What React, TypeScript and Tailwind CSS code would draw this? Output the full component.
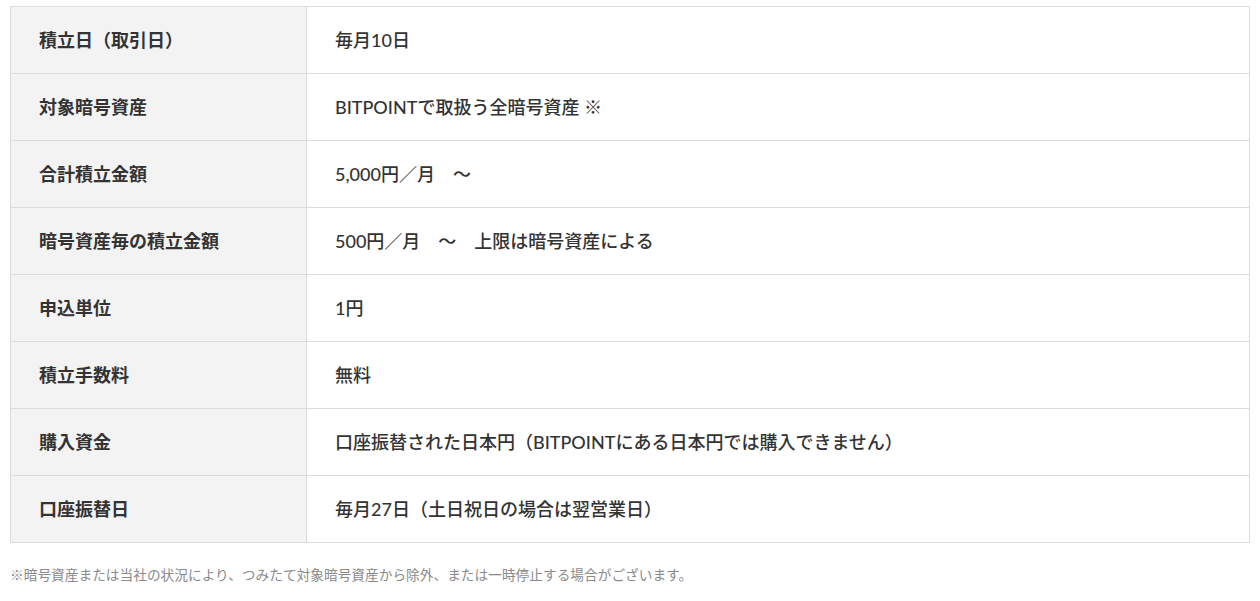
const rows: [string, string][] = [
  ["積立日（取引日）", "毎月10日"],
  ["対象暗号資産", "BITPOINTで取扱う全暗号資産 ※"],
  ["合計積立金額", "5,000円／月　～"],
  ["暗号資産毎の積立金額", "500円／月　～　上限は暗号資産による"],
  ["申込単位", "1円"],
  ["積立手数料", "無料"],
  ["購入資金", "口座振替された日本円（BITPOINTにある日本円では購入できません）"],
  ["口座振替日", "毎月27日（土日祝日の場合は翌営業日）"],
]

export default function App() {
  return (
    <div
      className="bg-white px-[10px] pt-[6px] text-[#333]"
      style={{ fontFamily: 'Lato, "Noto Sans CJK JP", sans-serif' }}
    >
      <table className="w-full border-collapse border border-[#dcdcdc]">
        <tbody>
          {rows.map(([label, value]) => (
            <tr key={label} className="h-[67px] border-b border-[#dcdcdc]">
              <th className="w-[296px] border-r border-[#dcdcdc] bg-[#f3f3f3] pl-[28px] text-left align-middle text-[18px] font-bold">
                {label}
              </th>
              <td className="pl-[28px] align-middle text-[18px] font-medium">{value}</td>
            </tr>
          ))}
        </tbody>
      </table>
      <p className="mt-[22px] text-[13.7px] text-[#8a8a8a]">
        ※暗号資産または当社の状況により、つみたて対象暗号資産から除外、または一時停止する場合がございます。
      </p>
    </div>
  )
}
